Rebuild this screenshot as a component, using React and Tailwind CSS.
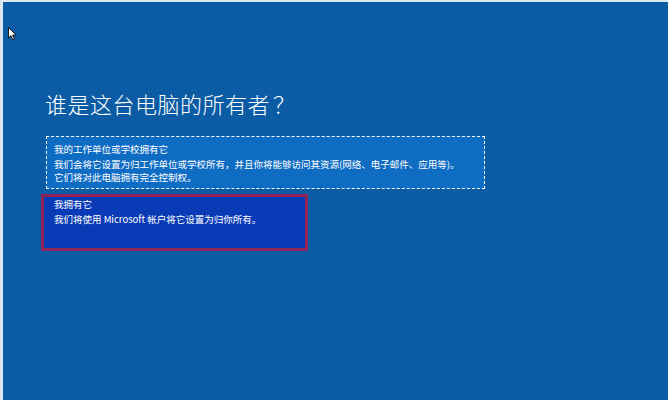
const cjk = { fontFamily: '"Microsoft YaHei", "Noto Sans CJK SC", "Noto Sans", sans-serif' }

function Cursor() {
  return (
    <svg className="absolute left-[5px] top-[25px]" width="9" height="14" viewBox="0 0 9 14">
      <path d="M0.5 0.5 L0.5 11 L3 8.6 L4.8 12.8 L6.4 12.1 L4.7 8 L8 8 Z" fill="#ffffff" stroke="#1a1a1a" strokeWidth="1" />
    </svg>
  )
}

export default function App() {
  return (
    <div
      className="relative h-[400px] w-[668px] overflow-hidden border-l-[3px] border-t-2 border-[#dce6ef] bg-[#0b5ca5] text-white"
      style={cjk}
    >
      <Cursor />
      <div className="pl-[42px] pt-[87px]">
        <h1 className="text-[22px] font-light leading-[28px] tracking-[0.5px]">
          谁是这台电脑的所有者<span className="ml-[3px]">？</span>
        </h1>

        <div className="ml-[1px] mt-[19px] w-[439px] border border-dashed border-white bg-[#0f6cc3] px-[7px] pb-[4px] pt-[5px] text-[9.5px]">
          <p className="leading-[14px]">我的工作单位或学校拥有它</p>
          <p className="mt-[2px] whitespace-nowrap leading-[13px]">我们会将它设置为归工作单位或学校所有，并且你将能够访问其资源(网络、电子邮件、应用等)。</p>
          <p className="leading-[13px]">它们将对此电脑拥有完全控制权。</p>
        </div>

        <div className="-ml-[4px] mt-[5px] h-[57px] w-[267px] border-[3px] border-[#8e2458] bg-[#0a3bb6] px-[10px] text-[9.5px]">
          <p className="leading-[14px]">我拥有它</p>
          <p className="mt-[1px] leading-[14px]">我们将使用 Microsoft 帐户将它设置为归你所有。</p>
        </div>
      </div>
    </div>
  )
}
